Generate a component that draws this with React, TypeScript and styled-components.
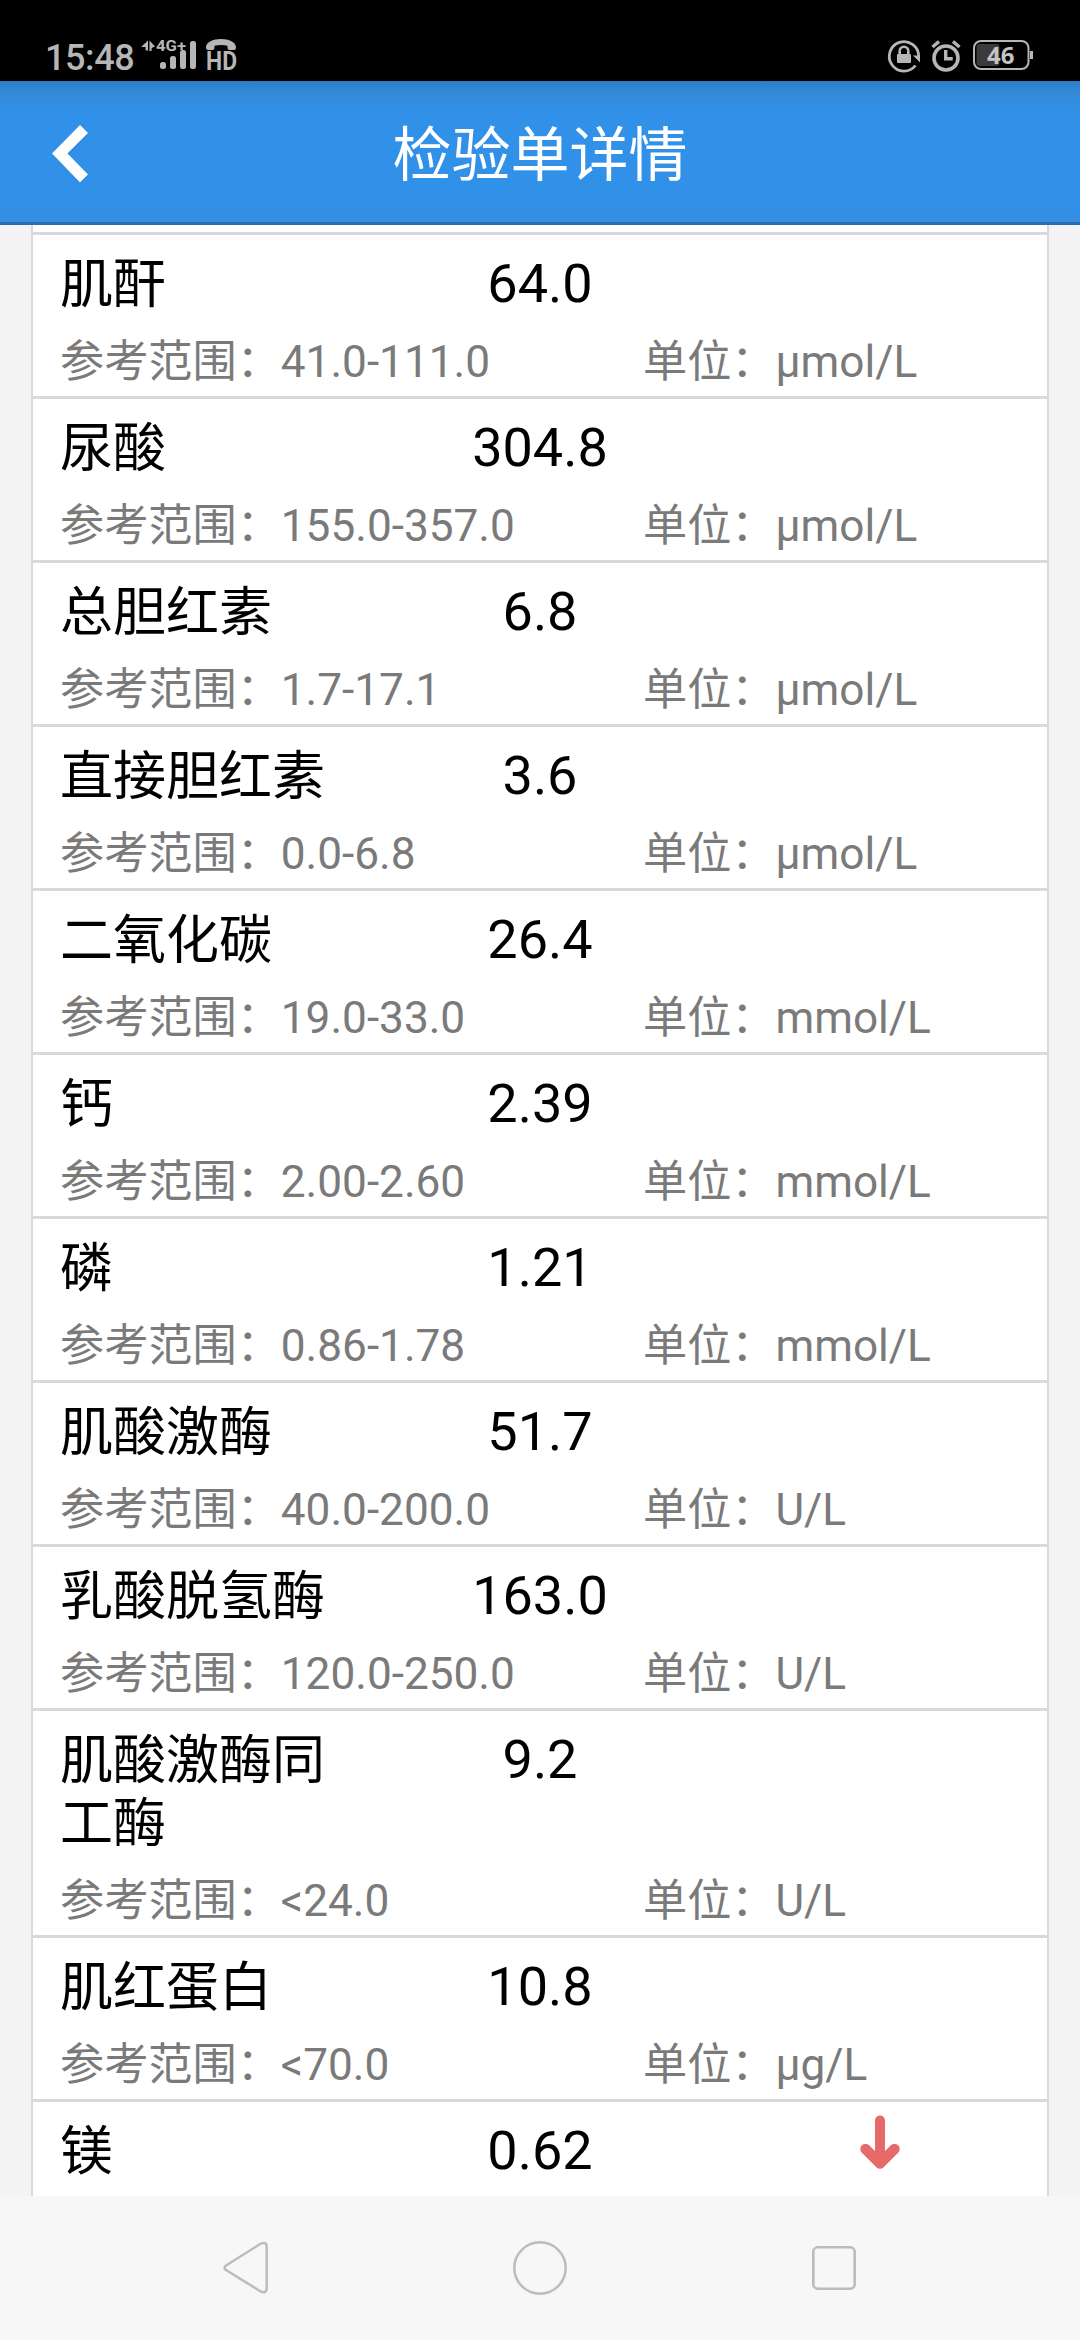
import React from "react";
import styled, { createGlobalStyle } from "styled-components";

const GlobalStyle = createGlobalStyle`
  * { box-sizing: border-box; }
  body {
    margin: 0;
    background: #f7f7f7;
    font-family: Roboto, "Noto Sans CJK SC", sans-serif;
  }
`;

const Screen = styled.div`
  display: flex;
  flex-direction: column;
  width: 1080px;
  height: 2340px;
  overflow: hidden;
`;

const StatusBar = styled.div`
  display: flex;
  justify-content: space-between;
  align-items: flex-start;
  flex: none;
  height: 81px;
  padding: 28px 45px 0;
  background: #000;
`;

const StatusGroup = styled.div`
  display: flex;
  align-items: flex-start;
`;

const Clock = styled.div`
  width: 91px;
  height: 42px;
  margin-top: 9px;
  color: #b6b6b6;
  font-size: 36px;
  font-weight: 500;
  letter-spacing: -0.4px;
  line-height: 42px;
  white-space: nowrap;
`;

const Glyphs = styled.svg`
  display: block;
  flex: none;
  overflow: visible;
`;

const Header = styled.header`
  display: grid;
  grid-template-columns: 144px 1fr 144px;
  align-items: center;
  flex: none;
  height: 144px;
  border-bottom: 3px solid #2a6cae;
  background: linear-gradient(#2b7fc9 0, #3388d6 10px, #328de1 22px, #3190e8 34px, #3190e8 126px, #348fdf 136px, #3190e8 141px);
`;

const BackButton = styled.button`
  display: flex;
  height: 100%;
  padding: 3px 0 0 50px;
  align-items: center;
  border: 0;
  background: none;
`;

const Title = styled.h1`
  margin: 0;
  padding-top: 9px;
  color: #fff;
  font-size: 59px;
  font-weight: 400;
  line-height: 70px;
  text-align: center;
`;

const Content = styled.main`
  flex: 1;
  min-height: 0;
  overflow: hidden;
  padding: 0 31px;
  background: #f4f4f4;
`;

const Card = styled.div`
  padding-top: 7px;
  border: solid #d9d9d9;
  border-width: 0 2px;
  background: #fff;
`;

const Item = styled.section`
  padding: 17px 27px 0;
  height: ${(p: { $lines: number }) => 101 + 63 * p.$lines}px;
  border-top: 3px solid #d9d9d9;
`;

const ResultLine = styled.div`
  display: grid;
  grid-template-columns: 1fr 1fr 1fr;
  align-items: start;
  color: #000;
  line-height: 63px;
`;

const Name = styled.div`
  padding: 2px 24px 0 0;
  font-size: 53px;
  word-break: break-all;
`;

const Value = styled.div`
  font-size: 54px;
  text-align: center;
`;

const Flag = styled.div`
  display: flex;
  height: 54px;
  margin-top: -4px;
  padding-left: 160px;
`;

const DetailLine = styled.div`
  display: grid;
  grid-template-columns: 583px 1fr;
  margin-top: 18px;
  color: #7a7a7a;
  font-size: 44.16px;
  line-height: 54px;
  white-space: nowrap;
`;

const NavBar = styled.nav`
  display: flex;
  justify-content: center;
  flex: none;
  height: 144px;
  background: #f7f7f7;
`;

const NavButton = styled.button`
  display: flex;
  align-items: center;
  justify-content: center;
  width: 294px;
  padding: 0;
  border: 0;
  background: none;
`;

type Result = {
  name: string;
  value: string;
  range: string;
  unit: string;
  low?: boolean;
};

const results: Result[] = [
  { name: "肌酐", value: "64.0", range: "41.0-111.0", unit: "µmol/L" },
  { name: "尿酸", value: "304.8", range: "155.0-357.0", unit: "µmol/L" },
  { name: "总胆红素", value: "6.8", range: "1.7-17.1", unit: "µmol/L" },
  { name: "直接胆红素", value: "3.6", range: "0.0-6.8", unit: "µmol/L" },
  { name: "二氧化碳", value: "26.4", range: "19.0-33.0", unit: "mmol/L" },
  { name: "钙", value: "2.39", range: "2.00-2.60", unit: "mmol/L" },
  { name: "磷", value: "1.21", range: "0.86-1.78", unit: "mmol/L" },
  { name: "肌酸激酶", value: "51.7", range: "40.0-200.0", unit: "U/L" },
  { name: "乳酸脱氢酶", value: "163.0", range: "120.0-250.0", unit: "U/L" },
  { name: "肌酸激酶同工酶", value: "9.2", range: "<24.0", unit: "U/L" },
  { name: "肌红蛋白", value: "10.8", range: "<70.0", unit: "µg/L" },
  { name: "镁", value: "0.62", range: "", unit: "", low: true },
];

const CHARS_PER_LINE = 5;

const SignalIcons = () => (
  <Glyphs width="104" height="46" viewBox="136 28 104 46" fill="#b6b6b6">
    <path d="M148 40.500V50.500h-2.400v-3.500h-4.600zM149.500 40.500l5.500 6-3.400 1.500v3h-2.100z" />
    <text x="156" y="51" fontSize="14.500" fontWeight="700" textLength="30" lengthAdjust="spacingAndGlyphs">4G+</text>
    <rect x="160" y="62" width="6" height="7" rx="2.500" />
    <rect x="170" y="56" width="6" height="13" rx="2.500" />
    <rect x="180" y="50" width="6" height="19" rx="2.500" />
    <rect x="190" y="41" width="6" height="28" rx="2.500" />
    <path d="M206 47.500C206 42 213 39 221 39s15 3 15 8.500q0 2.500-2 2.500h-4.500q-2 0-2-2v-2.200Q221 44 214.500 45.800V48q0 2-2 2H208q-2 0-2-2.500z" />
    <text x="206" y="70" fontSize="26" fontWeight="700" textLength="31" lengthAdjust="spacingAndGlyphs">HD</text>
  </Glyphs>
);

const SystemIcons = () => (
  <Glyphs width="148" height="46" viewBox="886 28 148 46" fill="none" stroke="#b6b6b6">
    <path d="M914.500 65.500A14.700 14.700 0 1 1 917.700 56" strokeWidth="2.800" />
    <path d="M912 55.500h7v7z" fill="#b6b6b6" stroke="none" />
    <rect x="896" y="54" width="14" height="9" rx="1" fill="#b6b6b6" stroke="none" />
    <path d="M898.700 55v-4a4.300 4.300 0 0 1 8.600 0v4" strokeWidth="2.600" />
    <circle cx="945" cy="58" r="12" strokeWidth="3.600" />
    <path d="M944.700 50v8.800h7" strokeWidth="3.400" />
    <path d="M931.500 47l6.500-5.500M958.500 47l-6.500-5.500" strokeWidth="3.400" />
    <rect x="975.500" y="44" width="23" height="22" rx="3" fill="#3b3b3b" stroke="none" />
    <rect x="973" y="41" width="54.500" height="28" rx="7" strokeWidth="2" />
    <rect x="1029" y="51" width="3" height="8" fill="#b6b6b6" stroke="none" />
    <text x="986" y="64" fontFamily="Noto Sans, sans-serif" fontSize="24" fontWeight="700" fill="#c4c4c4" stroke="none" textLength="27.500">46</text>
  </Glyphs>
);

const ResultItem = ({ item }: { item: Result }) => (
  <Item $lines={Math.ceil(item.name.length / CHARS_PER_LINE)}>
    <ResultLine>
      <Name>{item.name}</Name>
      <Value>{item.value}</Value>
      {item.low && (
        <Flag>
          <Glyphs width="40" height="54" viewBox="0 0 40 54" fill="none" stroke="#e56a6a" strokeLinecap="round" strokeLinejoin="round">
            <path d="M20 5.500V46" strokeWidth="10" />
            <path d="M5.500 34L20 48.500 34.500 34" strokeWidth="10.500" />
            <path d="M14 38h12l-6 8z" fill="#e56a6a" strokeWidth="2" />
          </Glyphs>
        </Flag>
      )}
    </ResultLine>
    {item.range && (
      <DetailLine>
        <span>参考范围：{item.range}</span>
        <span>单位：{item.unit}</span>
      </DetailLine>
    )}
  </Item>
);

export default function App() {
  return (
    <Screen>
      <GlobalStyle />
      <StatusBar>
        <StatusGroup>
          <Clock>15:48</Clock>
          <SignalIcons />
        </StatusGroup>
        <SystemIcons />
      </StatusBar>
      <Header>
        <BackButton aria-label="返回">
          <Glyphs width="40" height="60" viewBox="0 0 40 60">
            <path d="M3 32.500L30.500 3l8 8-20.500 21.500L38.500 53l-8 8z" fill="#2574bd" fillOpacity="0.350" />
            <path d="M2 30.500L30 2l8 8-20.500 20.500L38 51.500l-8 8z" fill="#fff" />
          </Glyphs>
        </BackButton>
        <Title>检验单详情</Title>
      </Header>
      <Content>
        <Card>
          {results.map((item) => (
            <ResultItem key={item.name} item={item} />
          ))}
        </Card>
      </Content>
      <NavBar>
        <NavButton aria-label="返回">
          <Glyphs width="46" height="54" viewBox="0 0 46 54" fill="none" stroke="#bcbcbc" strokeWidth="2.500">
            <path d="M3 24.500L37.500 2.800Q43.700 0 43.700 6V47q0 6-6 3.500L3 29Q0 26.700 3 24.500z" />
          </Glyphs>
        </NavButton>
        <NavButton aria-label="主页">
          <Glyphs width="54" height="54" viewBox="0 0 54 54" fill="none" stroke="#bcbcbc" strokeWidth="2.500">
            <circle cx="27" cy="27" r="25.700" />
          </Glyphs>
        </NavButton>
        <NavButton aria-label="最近任务">
          <Glyphs width="44" height="44" viewBox="0 0 44 44" fill="none" stroke="#bcbcbc" strokeWidth="2.600">
            <rect x="1.300" y="1.300" width="41.400" height="41.400" rx="4.500" />
          </Glyphs>
        </NavButton>
      </NavBar>
    </Screen>
  );
}
